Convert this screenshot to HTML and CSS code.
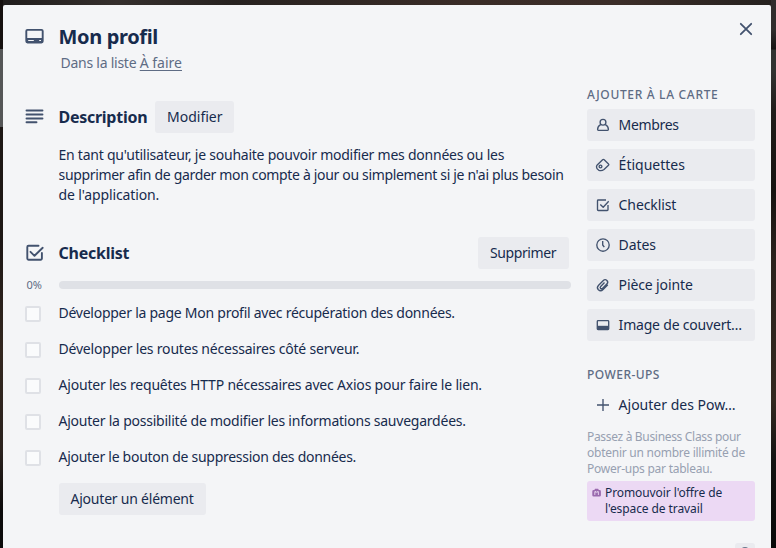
FILE: index.html
```html
<!DOCTYPE html>
<html lang="fr">
<head>
<meta charset="utf-8">
<title>Mon profil</title>
<link rel="stylesheet" href="styles.css">
</head>
<body>
<div class="modal">
  <button class="close" aria-label="Fermer"><svg width="14" height="14" viewBox="0 0 14 14"><path d="M1.800 1.800l10.400 10.400M12.200 1.800L1.800 12.200" fill="none" stroke="#42526e" stroke-width="1.800" stroke-linecap="round"/></svg></button>
  <header class="head">
    <svg class="hicon" width="20" height="20" viewBox="0 0 20 20"><rect x="2.300" y="3.900" width="16.400" height="12.600" rx="1.200" fill="none" stroke="#42526e" stroke-width="1.900"/><path d="M2.500 12h16v4.500h-16z" fill="#42526e"/><path d="M4.200 14.500h5.600M15.200 14.500h1.800" stroke="#f4f5f7" stroke-width="1.100"/></svg>
    <h1 class="title">Mon profil</h1>
    <p class="where"><span class="w1">Dans la liste </span><a>À faire</a></p>
  </header>
  <div class="columns">
    <main class="main">
      <section>
        <div class="row">
          <svg class="hicon" width="20" height="20" viewBox="0 0 20 20"><path d="M2.500 3.500h16M2.500 7.500h16M2.500 11.500h16M2.500 15.300h10" fill="none" stroke="#42526e" stroke-width="1.900" stroke-linecap="round"/></svg>
          <h2 class="h-desc">Description</h2><button class="btn edit">Modifier</button>
        </div>
        <p class="desc"><span class="d1">En tant qu'utilisateur, je souhaite pouvoir modifier mes données ou les</span><br><span class="d2">supprimer afin de garder mon compte à jour ou simplement si je n'ai plus besoin</span><br><span class="d3">de l'application.</span></p>
      </section>
      <section>
        <div class="row check-row">
          <svg class="hicon" width="20" height="20" viewBox="0 0 20 20"><path d="M14.500 2.700H4.500a1.200 1.200 0 0 0-1.200 1.200v11.600a1.200 1.200 0 0 0 1.200 1.200h12.200a1.200 1.200 0 0 0 1.200-1.200V10M6.500 8.800l4 4L18.700 4.800" fill="none" stroke="#42526e" stroke-width="1.900" stroke-linecap="round" stroke-linejoin="round"/></svg>
          <h2 class="h-check">Checklist</h2><button class="btn delete">Supprimer</button>
        </div>
        <div class="progress"><span class="pct">0%</span><div class="bar"></div></div>
        <ul class="items">
          <li><i class="box"></i><span class="i1">Développer la page Mon profil avec récupération des données.</span></li>
          <li><i class="box"></i><span class="i2">Développer les routes nécessaires côté serveur.</span></li>
          <li><i class="box"></i><span class="i3">Ajouter les requêtes HTTP nécessaires avec Axios pour faire le lien.</span></li>
          <li><i class="box"></i><span class="i4">Ajouter la possibilité de modifier les informations sauvegardées.</span></li>
          <li><i class="box"></i><span class="i5">Ajouter le bouton de suppression des données.</span></li>
        </ul>
        <button class="btn add">Ajouter un élément</button>
      </section>
    </main>
    <aside class="side">
      <h3 class="h-add">AJOUTER À LA CARTE</h3>
      <button class="sbtn"><svg width="16" height="16" viewBox="0 0 16 16"><circle cx="8" cy="5.200" r="2.900"/><path d="M5.600 7.600C3.600 8.500 2.600 10.300 2.600 12.600q0 .8.8.8h9.200q.8 0 .8-.8c0-2.300-1-4.100-3-5"/></svg><span class="s1">Membres</span></button>
      <button class="sbtn"><svg width="16" height="16" viewBox="0 0 16 16"><path d="M2.200 7.900L7.600 2.700q.8-.7 1.600 0l4.300 4.200q.7.7 0 1.400L9 12.500Q6.600 14.300 4 13.300 1.500 12 1.500 9.900 1.600 8.600 2.200 7.900z"/><circle cx="5.500" cy="9.500" r="1.400"/></svg><span class="s2">Étiquettes</span></button>
      <button class="sbtn"><svg width="16" height="16" viewBox="0 0 16 16"><path d="M11 3H3.300q-.8 0-.8.8v8.900q0 .8.8.8h8.900q.8 0 .8-.8V8M5.300 7.400l2.900 2.900 5.500-6"/></svg><span class="s3">Checklist</span></button>
      <button class="sbtn"><svg width="16" height="16" viewBox="0 0 16 16"><circle cx="8" cy="8" r="6.200"/><path d="M7.700 4v4l1.600 2.200"/></svg><span class="s4">Dates</span></button>
      <button class="sbtn"><svg width="16" height="16" viewBox="0 0 16 16"><path d="M12.800 7.700l-4.700 4.700c-1.400 1.400-3.300 1.600-4.700.3-1.300-1.300-1.100-3.200.2-4.500l4.500-4.500c1.100-1.100 2.700-1.300 3.800-.3 1.100 1.100.9 2.600-.1 3.700L7.700 11.200c-.7.7-1.500.8-2.100.2s-.5-1.400.1-2L9.500 5.600"/></svg><span class="s5">Pièce jointe</span></button>
      <button class="sbtn"><svg width="16" height="16" viewBox="0 0 16 16"><rect x="2.300" y="3.600" width="11.400" height="8.900" rx=".8"/><path d="M2 8.800h12v3.600H2z" class="fill"/></svg><span class="s6">Image de couvert…</span></button>
      <h3 class="h-pow">POWER-UPS</h3>
      <button class="sbtn plain"><svg width="16" height="16" viewBox="0 0 16 16"><path d="M8 2v12M2 8h12"/></svg><span class="s7">Ajouter des Pow…</span></button>
      <p class="note"><span class="n1">Passez à Business Class pour</span><br><span class="n2">obtenir un nombre illimité de</span><br><span class="n3">Power-ups par tableau.</span></p>
      <div class="promo"><svg width="10" height="10" viewBox="0 0 10 10"><path d="M2.600 2V1.400Q2.600.8 3.200.8h2.800q.6 0 .6.6V2h.9Q8.900 2 8.900 3.400v3.800Q8.900 8.600 7.500 8.600H1.700Q.3 8.600.3 7.200V3.400Q.3 2 1.700 2z" fill="#9a6aae"/><path d="M2.800 7V3.600h1.200v1.500M5.200 4.600v-1h1.200V7" fill="none" stroke="#ead8f2" stroke-width=".9"/></svg><p><span class="p1">Promouvoir l'offre de</span><br><span class="p2">l'espace de travail</span></p></div>
      <div class="next"><i></i></div>
    </aside>
  </div>
</div>
</body>
</html>
```
FILE: styles.css
```css
* { box-sizing: border-box; }
body {
  margin: 0; height: 548px; overflow: hidden; padding: 5px 5px 0 3px;
  font: 14px/20px "Noto Sans", "Open Sans", sans-serif; color: #172b4d;
  background:
    linear-gradient(#15100f 0 49px, #555657 49px 127px, #1d1715 127px 240px, #33271f 350px, #2b221e 450px, #0c0b0b 510px) left / 3px 100% no-repeat,
    linear-gradient(#302d2c 0 30px, #171413 49px, #313230 50px 72px, #211d1a 110px, #171310 190px, #2b221d 260px, #33281f 400px, #141312 460px, #080908 548px) right / 5px 100% no-repeat,
    linear-gradient(90deg, #201d1c, #352f2d 15%, #272220 30%, #3a2c27 60%, #3b2d28 80%, #25211f);
}
h1, h2, h3, p, ul { margin: 0; padding: 0; font-weight: normal; }
button { border: 0; padding: 0; font: inherit; color: inherit; text-align: left; white-space: nowrap; }
svg { display: block; flex: none; }
.modal { position: relative; width: 768px; height: 560px; background: #f4f5f7; border-radius: 2px; }
.close { position: absolute; left: 736px; top: 17px; background: none; }
.head { display: grid; grid-template-columns: 34.5px 1fr; padding: 21px 0 0 21px; height: 74px; grid-template-rows: 22px 20px; row-gap: 5px; }
.title { font-size: 20px; line-height: 22px; font-weight: 700; letter-spacing: -.35px; }
.where { grid-column: 2; padding-left: 2px; color: #5e6c84; white-space: nowrap; }
.where a { text-decoration: underline; text-underline-offset: 2px; }
.columns { display: flex; }
.main { width: 568px; padding: 22px 0 0 21px; }
.row { display: flex; align-items: center; height: 32px; }
.hicon { margin-right: 14.5px; }
.head .hicon { margin: 0; }
h2 { font-size: 16px; line-height: 20px; font-weight: 700; white-space: nowrap; }
.h-desc { width: 96.5px; letter-spacing: -.27px; }
.h-check { letter-spacing: -.25px; }
.btn { height: 32px; background: #eaebef; border-radius: 3px; padding-left: 12px; line-height: 32px; }
.edit { width: 79px; }
.delete { width: 91px; margin-left: auto; margin-right: 2px; letter-spacing: -.4px; }
.desc { margin: 12px 0 32px 34.5px; white-space: nowrap; }
.progress { display: flex; align-items: center; height: 20px; margin-top: 6px; }
.pct { width: 35px; padding-left: 2.5px; font-size: 11px; color: #5e6c84; }
.bar { width: 512px; height: 8px; border-radius: 4px; background: #dfe1e6; }
.items { list-style: none; }
.items li { display: flex; align-items: center; height: 36px; white-space: nowrap; }
.box { width: 16px; height: 16px; margin: 2px 17.5px 0 1px; border: 2px solid #dfe1e6; border-radius: 2px; background: #fafbfc; }
.add { display: block; width: 147px; margin: 8px 0 0 35px; padding-left: 11.5px; letter-spacing: -.22px; }
.side { width: 168px; margin-left: 16px; padding-top: 6px; }
h3 { font-size: 12px; line-height: 20px; font-weight: 500; color: #5e6c84; white-space: nowrap; }
.h-add { margin-bottom: 4px; letter-spacing: .68px; }
.h-pow { margin: 24px 0 4px; letter-spacing: .45px; }
.sbtn { display: flex; align-items: center; width: 168px; height: 32px; margin-bottom: 8px; padding-left: 7.6px; background: #eaebef; border-radius: 3px; }
.sbtn svg { margin-right: 8px; fill: none; stroke: #42526e; stroke-width: 1.35; stroke-linejoin: round; }
.sbtn .fill { fill: #42526e; stroke: none; }
.sbtn.plain { background: none; }
.note { font-size: 12px; line-height: 16px; color: #97a0b1; white-space: nowrap; }
.promo { display: flex; height: 40px; margin-top: 4px; padding: 4px 0 0 5px; border-radius: 3px; background: #ecd9f4; font-size: 12px; line-height: 16px; white-space: nowrap; }
.promo svg { margin: 3px 3px 0 0; }
.next { width: 20px; height: 20px; margin: 22px 0 0 148px; border-radius: 3px; background: #eaebef; padding: 4px 6px; }
.next i { display: block; width: 8px; height: 8px; border: 2px solid #6b778c; border-radius: 50%; }
.w1 { letter-spacing: -.25px; }
.d1 { letter-spacing: -.235px; }
.d2 { letter-spacing: -.33px; }
.d3 { letter-spacing: -.12px; }
.i1 { letter-spacing: -.255px; }
.i2 { letter-spacing: -.2px; }
.i3 { letter-spacing: -.2px; }
.i4 { letter-spacing: -.23px; }
.i5 { letter-spacing: -.28px; }
.s1 { letter-spacing: -.35px; }
.s3 { letter-spacing: -.1px; }
.s4 { letter-spacing: -.1px; }
.s5 { letter-spacing: -.12px; }
.s6 { letter-spacing: -.2px; }
.n1 { letter-spacing: -.32px; }
.n2 { letter-spacing: -.25px; }
.n3 { letter-spacing: -.25px; }
.p1, .p2 { letter-spacing: -.09px; }
```
